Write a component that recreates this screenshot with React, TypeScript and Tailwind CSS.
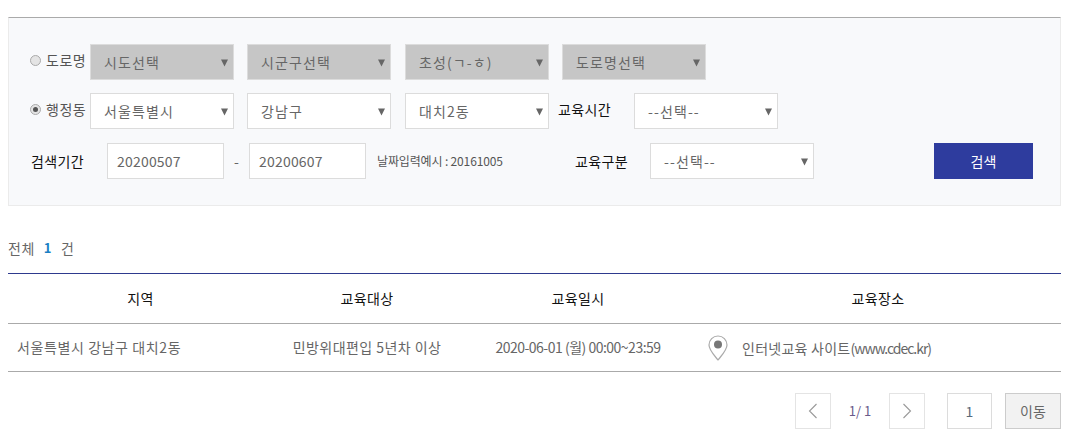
const fontStack = "font-['Noto_Sans_CJK_KR','Noto_Sans',sans-serif]";

function Caret() {
  return (
    <svg width="7" height="8" viewBox="0 0 7 8" className="shrink-0 mt-[1px]">
      <path d="M0 0.5H7L3.5 7.5Z" fill="#666" />
    </svg>
  );
}

function Select({
  label,
  disabled,
  width = 'w-[144px]',
}: {
  label: string;
  disabled?: boolean;
  width?: string;
}) {
  return (
    <div
      className={`${width} h-[36px] shrink-0 flex items-center justify-between pl-[13px] pr-[5px] border border-[#dcdcdc] text-[14px] tracking-[1.1px] text-[#666] ${
        disabled ? 'bg-[#c6c6c6]' : 'bg-white'
      }`}
    >
      <span>{label}</span>
      <Caret />
    </div>
  );
}

function Radio({ label, checked }: { label: string; checked?: boolean }) {
  return (
    <div className="w-[81px] shrink-0 pl-[21px] flex items-center gap-[5px] -mt-[3px]">
      <span className="w-[11px] h-[11px] rounded-full border border-[#aaa] bg-[#e4e4e4] flex items-center justify-center shrink-0">
        {checked && <span className="w-[5px] h-[5px] rounded-full bg-[#555]" />}
      </span>
      <span className="text-[14px] text-[#555] tracking-[0.5px] whitespace-nowrap">{label}</span>
    </div>
  );
}

function PageBtn({ dir }: { dir: 'prev' | 'next' }) {
  return (
    <div className="w-[36px] h-[36px] border border-[#e4e4e4] flex items-center justify-center">
      <svg width="10" height="16" viewBox="0 0 10 16" fill="none" stroke="#999" strokeWidth="1.1">
        {dir === 'prev' ? <path d="M8.5 1L1.5 8L8.5 15" /> : <path d="M1.5 1L8.5 8L1.5 15" />}
      </svg>
    </div>
  );
}

export default function App() {
  return (
    <div className={`${fontStack} w-[1071px] h-[440px] bg-white overflow-hidden pl-[8px] pt-[17px] pr-[10px]`}>
      {/* search panel */}
      <div className="h-[189px] bg-[#f8f9fb] border border-[#ebebeb] border-t-[#aaa] pt-[26px] flex flex-col">
        <div className="flex items-center">
          <Radio label="도로명" />
          <Select label="시도선택" disabled />
          <div className="ml-[13px]"><Select label="시군구선택" disabled /></div>
          <div className="ml-[14px]"><Select label="초성(ㄱ-ㅎ)" disabled /></div>
          <div className="ml-[13px]"><Select label="도로명선택" disabled /></div>
        </div>

        <div className="flex items-center mt-[13px]">
          <Radio label="행정동" checked />
          <Select label="서울특별시" />
          <div className="ml-[13px]"><Select label="강남구" /></div>
          <div className="ml-[14px]"><Select label="대치2동" /></div>
          <span className="ml-[9px] w-[76px] -mt-[3px] text-[14px] tracking-[0.4px] text-[#111] whitespace-nowrap">교육시간</span>
          <Select label="--선택--" />
        </div>

        <div className="flex items-center mt-[14px]">
          <span className="ml-[22px] w-[76px] text-[14px] tracking-[0.4px] text-[#111] whitespace-nowrap">검색기간</span>
          <div className="w-[117px] h-[36px] border border-[#dcdcdc] bg-white flex items-center pl-[9px] text-[14px] tracking-[0.2px] text-[#666]">20200507</div>
          <span className="w-[25px] text-center text-[14px] text-[#666]">-</span>
          <div className="w-[117px] h-[36px] border border-[#dcdcdc] bg-white flex items-center pl-[9px] text-[14px] tracking-[0.2px] text-[#666]">20200607</div>
          <span className="ml-[11px] w-[198px] text-[12px] tracking-[-0.15px] text-[#555] whitespace-nowrap">날짜입력예시 : 20161005</span>
          <span className="w-[75px] text-[14px] tracking-[0.4px] text-[#111] whitespace-nowrap">교육구분</span>
          <Select label="--선택--" width="w-[164px]" />
          <button className="ml-[120px] w-[99px] h-[36px] bg-[#2e3c9e] text-white text-[14px]">검색</button>
        </div>
      </div>

      {/* total count */}
      <div className="mt-[32px] h-[20px] flex items-center text-[14px] tracking-[0.5px] text-[#666]">
        <span>전체</span>
        <span className="ml-[9px] font-bold text-[#1a7fc4] text-[13px]">1</span>
        <span className="ml-[9px]">건</span>
      </div>

      {/* result table */}
      <div className="mt-[15px] border-t border-[#2e3a8e]">
        <div className="grid grid-cols-[265px_188px_234px_366px] h-[50px] pb-[1px] items-center text-center text-[14px] tracking-[0.4px] text-[#111] border-b border-[#aaa]">
          <span>지역</span>
          <span>교육대상</span>
          <span>교육일시</span>
          <span>교육장소</span>
        </div>
        <div className="grid grid-cols-[265px_188px_234px_366px] h-[48px] items-center text-[14px] text-[#666] border-b border-[#aaa]">
          <span className="pl-[9px] tracking-[0.6px] whitespace-nowrap">서울특별시 강남구 대치2동</span>
          <span className="text-center tracking-[0.45px] whitespace-nowrap">민방위대편입 5년차 이상</span>
          <span className="text-center tracking-[-0.5px] whitespace-nowrap">2020-06-01 (월) 00:00~23:59</span>
          <div className="flex items-center pl-[13px]">
            <svg width="20" height="26" viewBox="0 0 20 26" className="shrink-0">
              <path
                d="M10 1C5 1 1 5 1 10C1 15 6 20 10 25C14 20 19 15 19 10C19 5 15 1 10 1Z"
                fill="#fff"
                stroke="#aaa"
                strokeWidth="1.2"
              />
              <circle cx="10" cy="9.5" r="4" fill="#777" />
            </svg>
            <span className="ml-[14px] mt-[2px] whitespace-nowrap tracking-[0.25px]">
              인터넷교육 사이트<span className="tracking-[-1px]">(www.cdec.kr)</span>
            </span>
          </div>
        </div>
      </div>

      {/* pagination */}
      <div className="mt-[21px] flex items-center justify-end">
        <PageBtn dir="prev" />
        <span className="w-[58px] text-center text-[13px] text-[#6a5a8a]">1/ 1</span>
        <PageBtn dir="next" />
        <div className="ml-[22px] w-[45px] h-[36px] border border-[#dcdcdc] flex items-center justify-center text-[14px] text-[#5a6a7a]">1</div>
        <div className="ml-[13px] w-[56px] h-[36px] border border-[#ccc] bg-[#f2f2f2] flex items-center justify-center text-[14px] text-[#666]">이동</div>
      </div>
    </div>
  );
}
